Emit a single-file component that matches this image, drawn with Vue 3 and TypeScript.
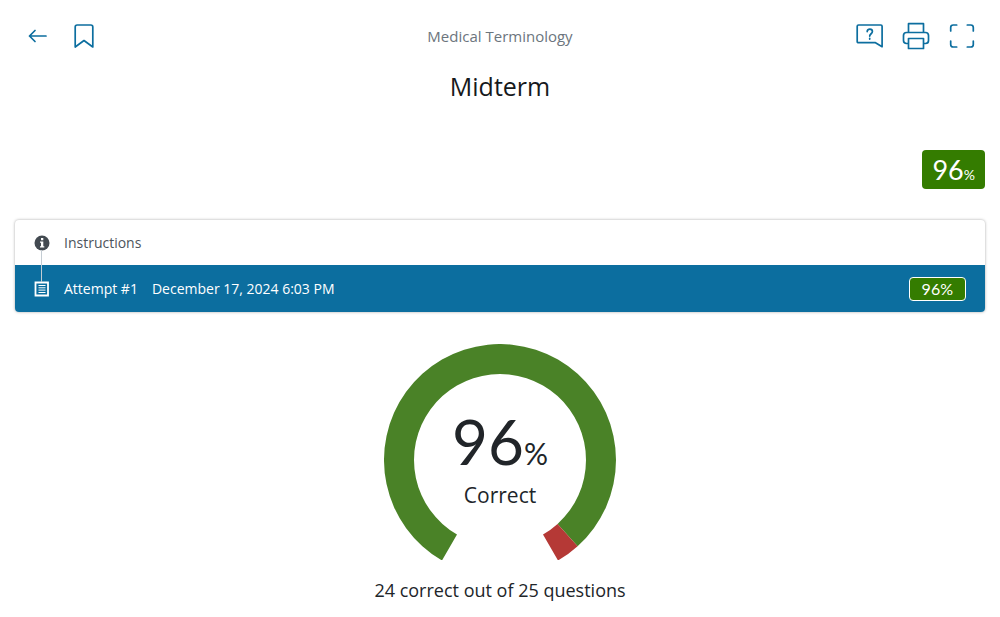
<script setup lang="ts">
import { computed, ref } from 'vue'

interface Attempt {
  id: number
  date: string
  score: number
}

const course = 'Medical Terminology'
const title = 'Midterm'
const total = 25
const correct = 24
const score = computed(() => Math.round((correct / total) * 100))
const attempts = ref<Attempt[]>([{ id: 1, date: 'December 17, 2024 6:03 PM', score: 96 }])

const OUTER = 116
const INNER = 86
const START = 210
const SWEEP = 300

function point(radius: number, angle: number): string {
  const rad = (angle * Math.PI) / 180
  const x = OUTER + radius * Math.sin(rad)
  const y = OUTER - radius * Math.cos(rad)
  return `${x.toFixed(2)} ${y.toFixed(2)}`
}

function segment(from: number, to: number): string {
  const a = START + from * SWEEP
  const b = START + to * SWEEP
  const large = b - a > 180 ? 1 : 0
  return `M${point(OUTER, a)} A${OUTER} ${OUTER} 0 ${large} 1 ${point(OUTER, b)} L${point(INNER, b)} A${INNER} ${INNER} 0 ${large} 0 ${point(INNER, a)} Z`
}

const correctPath = computed(() => segment(0, correct / total))
const wrongPath = computed(() => segment(correct / total, 1))
</script>

<template>
  <div class="page">
    <header class="bar">
      <div class="tools">
        <button type="button" class="tool" aria-label="Back">
          <svg width="28" height="28" viewBox="0 0 28 28"><path d="M22 14H5.5M11 8.500L5.500 14l5.500 5.500" /></svg>
        </button>
        <button type="button" class="tool" aria-label="Bookmark">
          <svg width="28" height="28" viewBox="0 0 28 28"><path d="M5.200 25V5q0-2 2-2h13.600q2 0 2 2v20L14 18.500z" /></svg>
        </button>
      </div>
      <p class="course">{{ course }}</p>
      <div class="tools end">
        <button type="button" class="tool" aria-label="Help">
          <svg width="28" height="28" viewBox="0 0 28 28">
            <path d="M2.500 3h22.300q1.300 0 1.300 1.300V24.700L19.500 20.700H2.500q-1.300 0-1.300-1.300V4.300Q1.200 3 2.500 3z" />
            <path d="M11.200 9.600c0-3.300 5.200-3.300 5.200 0c0 2.100-2.700 2.200-2.700 4.500M13.700 16.300v0.800" />
          </svg>
        </button>
        <button type="button" class="tool" aria-label="Print">
          <svg width="28" height="28" viewBox="0 0 28 28">
            <path d="M6.500 10.500V1.700h15v8.800M6.500 21.500H4.500q-3 0-3-3v-5q0-3 3-3h19q3 0 3 3v5q0 3-3 3h-2M6.500 16.500h15v10h-15z" />
          </svg>
        </button>
        <button type="button" class="tool" aria-label="Full screen">
          <svg width="28" height="28" viewBox="0 0 28 28">
            <path d="M2.700 9V5.500q0-2.500 2.500-2.500h3.500M19.300 3h3.500q2.500 0 2.500 2.500V9M25.300 19v3.500q0 2.500-2.500 2.500h-3.500M8.700 25H5.200q-2.500 0-2.500-2.500V19" />
          </svg>
        </button>
      </div>
    </header>
    <h1 class="title">{{ title }}</h1>

    <main class="content">
      <div class="summary">
        <div class="grade">{{ score }}<small>%</small></div>
      </div>

      <div class="list">
        <button type="button" class="row">
          <svg class="mark" width="16" height="16" viewBox="0 0 16 16">
            <circle cx="8" cy="8" r="7.500" fill="#434a51" />
            <path d="M7 3h2.300v2.200H7zM6 6.500h3.300v4.700h1V12.500H6v-1.300h1V7.800H6z" fill="#fff" />
          </svg>
          <span>Instructions</span>
        </button>
        <button v-for="a in attempts" :key="a.id" type="button" class="row active">
          <svg class="mark" width="16" height="16" viewBox="0 0 16 16">
            <path d="M1.500 1.500h12.500v13H1.500z" fill="none" stroke="#fff" stroke-width="1.800" />
            <path d="M4.500 4.500h7M4.500 6.800h7M4.500 9.100h7M4.500 11.500h7" fill="none" stroke="#fff" />
          </svg>
          <span>Attempt #{{ a.id }}</span>
          <span>{{ a.date }}</span>
          <span class="badge">{{ a.score }}%</span>
        </button>
      </div>

      <section class="result">
        <div class="gauge">
          <svg width="232" height="216" viewBox="0 0 232 216" aria-hidden="true">
            <path :d="correctPath" fill="#4a8227" />
            <path :d="wrongPath" fill="#b53936" />
          </svg>
          <div class="reading">
            <div class="value">{{ score }}<small>%</small></div>
            <div class="label">Correct</div>
          </div>
        </div>
        <p class="detail">{{ correct }} correct out of {{ total }} questions</p>
      </section>
    </main>
  </div>
</template>

<style>
body {
  margin: 0;
  background: #fff;
}
</style>

<style scoped>
.page {
  font-family: "Open Sans", "Noto Sans", sans-serif;
  font-size: 15px;
  color: #212529;
}
button {
  font: inherit;
  border: 0;
  background: none;
  padding: 0;
  cursor: pointer;
}
p,
h1 {
  margin: 0;
  font-weight: 400;
}
.bar {
  display: grid;
  grid-template-columns: 1fr auto 1fr;
  align-items: center;
  height: 72px;
  padding: 0 24px;
}
.tools {
  display: flex;
  gap: 18px;
}
.end {
  justify-content: flex-end;
}
.tool {
  display: flex;
}
.tool svg {
  fill: none;
  stroke: #0c6e9f;
  stroke-width: 1.700;
  stroke-linejoin: round;
  stroke-linecap: round;
}
.course {
  color: #6c757d;
}
.title {
  font-size: 25px;
  line-height: 28px;
  text-align: center;
  color: #16191c;
}
.content {
  padding: 0 15px;
}
.summary {
  display: flex;
  justify-content: flex-end;
  padding: 50px 0 31px;
}
.grade {
  padding: 0 10px;
  border-radius: 4px;
  background: #347c00;
  color: #fff;
  font-family: Lato, "Noto Sans", sans-serif;
  font-size: 27px;
  line-height: 39px;
}
small {
  line-height: 1;
}
.grade small {
  font-size: 14px;
}
.list {
  border-radius: 4px;
  box-shadow: 0 0 3px rgba(0, 0, 0, 0.35);
  overflow: hidden;
}
.row {
  position: relative;
  display: flex;
  align-items: center;
  gap: 14px;
  width: 100%;
  height: 45px;
  padding: 0 19px;
  color: #4d545b;
  font-size: 14px;
  text-align: left;
}
.active {
  height: 47px;
  background: #0c6e9f;
  color: #fff;
}
.active::before {
  content: "";
  position: absolute;
  left: 26px;
  top: -15px;
  width: 1px;
  height: 32px;
  background: #c3ccd3;
}
.mark {
  flex: none;
  width: 16px;
}
.badge {
  margin-left: auto;
  padding: 0 12px;
  border: 1px solid #fff;
  border-radius: 4px;
  background: #347c00;
  font-family: Lato, "Noto Sans", sans-serif;
  font-size: 16px;
  line-height: 22px;
}
.result {
  display: flex;
  flex-direction: column;
  align-items: center;
  padding-top: 32px;
}
.gauge {
  display: grid;
  justify-items: center;
}
.gauge > * {
  grid-area: 1 / 1;
}
.reading {
  padding-top: 60px;
  text-align: center;
}
.value {
  font-size: 62px;
  line-height: 74px;
  font-family: Lato, "Noto Sans", sans-serif;
}
.value small {
  font-size: 30px;
}
.label {
  font-size: 21px;
  line-height: 34px;
}
.detail {
  margin-top: 16px;
  font-size: 18px;
  line-height: 28px;
}
</style>
